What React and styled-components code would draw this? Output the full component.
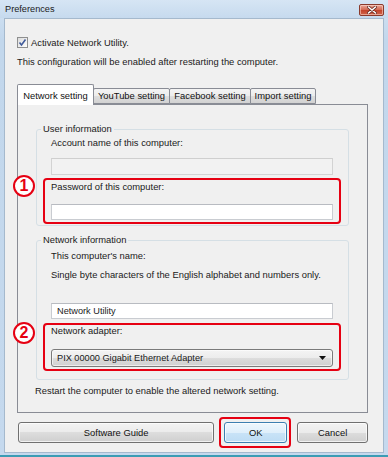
import React from "react";
import styled, { createGlobalStyle } from "styled-components";

const GlobalStyle = createGlobalStyle`
  html, body { margin: 0; padding: 0; background: #ffffff; }
  body { font-family: "Liberation Sans", Arial, sans-serif; }
  *, *::before, *::after { box-sizing: border-box; }
`;

const FONT = `"Liberation Sans", Arial, sans-serif`;
const RED = "#e60012";

const Window = styled.div`
  width: 388px;
  height: 457px;
  display: flex;
  flex-direction: column;
  background: linear-gradient(#d3e3f3, #c2d7ec 40px, #c5d9ee);
  border-bottom: 2px solid #3b9cb4;
  font-family: ${FONT};
  font-size: 9.4px;
  color: #1a1a1a;
`;

const TitleBar = styled.div`
  height: 18px;
  flex: none;
  display: flex;
  align-items: center;
  padding: 0 4px 0 5px;
  background: linear-gradient(#d6e5f4, #c6daee);
`;

const Title = styled.span`
  font-size: 9.2px;
  color: #1b1b1b;
  flex: 1;
`;

const CloseButton = styled.div`
  width: 25px;
  height: 12px;
  margin-top: 1px;
  border: 1px solid #8a3a2c;
  border-radius: 2px;
  background: linear-gradient(#e9aa9c, #d56d57 45%, #c4452d 55%, #d0654c);
  box-shadow: inset 0 0 0 1px rgba(255, 220, 210, 0.55);
  display: flex;
  align-items: center;
  justify-content: center;
`;

const Client = styled.div`
  flex: 1;
  margin: 0 4px 2px 4px;
  background: #f0f0f0;
  border: 1px solid #a5b9cd;
  display: flex;
  flex-direction: column;
  padding: 0 15px 0 12px;
`;

const CheckRow = styled.label`
  margin-top: 16px;
  height: 14px;
  display: flex;
  align-items: center;
  gap: 3px;
`;

const CheckBox = styled.span`
  width: 11px;
  height: 11px;
  border: 1px solid #8e8f8f;
  background: linear-gradient(135deg, #dcdcdc, #fdfdfd);
  display: flex;
  align-items: center;
  justify-content: center;
`;

const Line = styled.div`
  height: ${(p) => p.$h || 14}px;
  line-height: ${(p) => p.$h || 14}px;
  margin-top: ${(p) => p.$mt || 0}px;
  margin-left: ${(p) => p.$ml || 0}px;
  white-space: nowrap;
`;

const TabBar = styled.div`
  margin-top: 15px;
  display: flex;
  align-items: flex-end;
  height: 20px;
`;

const Tab = styled.div`
  position: relative;
  z-index: ${(p) => (p.$active ? 2 : 1)};
  width: ${(p) => p.$w}px;
  height: ${(p) => (p.$active ? 21 : 16)}px;
  margin-left: ${(p) => (p.$first ? 0 : -1)}px;
  margin-bottom: ${(p) => (p.$active ? -1 : 0)}px;
  padding-top: ${(p) => (p.$active ? 4 : 0)}px;
  border: 1px solid #898c95;
  border-bottom: ${(p) => (p.$active ? "none" : "1px solid #898c95")};
  border-radius: 2px 2px 0 0;
  background: ${(p) =>
    p.$active
      ? "#ffffff"
      : "linear-gradient(#f4f4f4, #ececec 50%, #dedede 50%, #d2d2d2)"};
  display: flex;
  align-items: ${(p) => (p.$active ? "flex-start" : "center")};
  justify-content: center;
  white-space: nowrap;
  color: #111;
  line-height: 14px;
`;

const Panel = styled.div`
  border: 1px solid #898c95;
  background: #f0f0f0;
  padding: 18px 18px 14px 18px;
  display: flex;
  flex-direction: column;
`;

const Group = styled.fieldset`
  margin: ${(p) => p.$mt || 0}px 0 0 0;
  padding: 0 15px ${(p) => p.$pb || 0}px 14px;
  border: 1px solid #d5dfe5;
  border-radius: 3px;
  min-width: 0;
`;

const Legend = styled.legend`
  margin-left: -10px;
  padding: 0 2px;
  height: 12px;
  line-height: 12px;
  color: #1a1a1a;
`;

const TextBox = styled.div`
  height: ${(p) => p.$h || 17}px;
  margin-top: ${(p) => p.$mt || 0}px;
  border: 1px solid ${(p) => (p.$disabled ? "#d3d3d3" : "#c9ccd1")};
  border-top-color: ${(p) => (p.$disabled ? "#cfcfcf" : "#b8bbc1")};
  background: ${(p) => (p.$disabled ? "#f2f2f2" : "#ffffff")};
  padding-left: 5px;
  display: flex;
  align-items: center;
  font-size: 9.2px;
  color: #222;
  white-space: nowrap;
`;

const Marked = styled.div`
  position: relative;
  margin: ${(p) => p.$mt || 0}px -8px 0 -8px;
  padding: 0 6px 2px 6px;
  border: 2px solid ${RED};
  border-radius: 4px;
`;

const Badge = styled.div`
  position: absolute;
  left: -32px;
  top: ${(p) => p.$top}px;
  width: 22px;
  height: 22px;
  border: 2px solid ${RED};
  border-radius: 50%;
  background: #ffffff;
  color: ${RED};
  font-family: "Liberation Sans", Arial, sans-serif;
  font-weight: bold;
  font-size: 16px;
  line-height: 18px;
  text-align: center;
`;

const Select = styled.div`
  height: 18px;
  margin-top: ${(p) => p.$mt || 0}px;
  border: 1px solid #7a7a7a;
  border-radius: 3px;
  background: linear-gradient(#f4f4f4, #ececec 50%, #dddddd 50%, #d0d0d0);
  box-shadow: inset 0 0 0 1px rgba(255, 255, 255, 0.6);
  display: flex;
  align-items: center;
  padding: 0 6px 0 5px;
  font-size: 9.2px;
  color: #1a1a1a;
  white-space: nowrap;
`;

const SelectText = styled.span`
  flex: 1;
`;

const ButtonRow = styled.div`
  margin-top: 4px;
  display: flex;
  align-items: center;
  padding-left: 1px;
`;

const Button = styled.button`
  width: ${(p) => p.$w}px;
  height: 21px;
  margin-left: ${(p) => p.$ml || 0}px;
  padding: 0;
  border: 1px solid ${(p) => (p.$primary ? "#3c7fb1" : "#707070")};
  border-radius: 3px;
  background: ${(p) =>
    p.$primary
      ? "linear-gradient(#eef7fd, #dfeffb 50%, #c9e3f7 50%, #bddcf4)"
      : "linear-gradient(#f3f3f3, #ebebeb 50%, #dddddd 50%, #cfcfcf)"};
  box-shadow: inset 0 0 0 1px rgba(255, 255, 255, 0.7);
  font-family: ${FONT};
  font-size: 9.4px;
  color: #111;
`;

const Highlight = styled.div`
  margin-left: ${(p) => p.$ml || 0}px;
  padding: 3px 2px 3px 3px;
  border: 2px solid ${RED};
  border-radius: 4px;
  display: flex;
`;

export default function App() {
  return (
    <>
      <GlobalStyle />
      <Window>
        <TitleBar>
          <Title>Preferences</Title>
          <CloseButton>
            <svg width="10" height="8" viewBox="0 0 10 8">
              <path d="M1.5 1 L8.5 7 M8.5 1 L1.5 7" stroke="#6b2a20" strokeWidth="3" strokeLinecap="round" />
              <path d="M1.5 1 L8.5 7 M8.5 1 L1.5 7" stroke="#ffffff" strokeWidth="1.6" strokeLinecap="round" />
            </svg>
          </CloseButton>
        </TitleBar>
        <Client>
          <CheckRow>
            <CheckBox>
              <svg width="9" height="9" viewBox="0 0 9 9">
                <path d="M1.5 4.5 L3.5 7 L7.5 1.5" fill="none" stroke="#3f5a9a" strokeWidth="1.6" />
              </svg>
            </CheckBox>
            <span>Activate Network Utility.</span>
          </CheckRow>
          <Line $mt={6}>This configuration will be enabled after restarting the computer.</Line>
          <TabBar>
            <Tab $active $first $w={77}>Network setting</Tab>
            <Tab $w={77}>YouTube setting</Tab>
            <Tab $w={82}>Facebook setting</Tab>
            <Tab $w={66}>Import setting</Tab>
          </TabBar>
          <Panel>
            <Group $pb={1}>
              <Legend>User information</Legend>
              <Line $mt={1}>Account name of this computer:</Line>
              <TextBox $disabled $mt={8} $h={17} />
              <Marked $mt={3}>
                <Badge $top={-5}>1</Badge>
                <Line>Password of this computer:</Line>
                <TextBox $mt={10} $h={16} />
              </Marked>
            </Group>
            <Group $mt={8} $pb={8}>
              <Legend>Network information</Legend>
              <Line $mt={3}>This computer's name:</Line>
              <Line $mt={5}>Single byte characters of the English alphabet and numbers only.</Line>
              <TextBox $mt={21} $h={16}>Network Utility</TextBox>
              <Marked $mt={4}>
                <Badge $top={-3}>2</Badge>
                <Line $h={12}>Network adapter:</Line>
                <Select $mt={12}>
                  <SelectText>PIX 00000 Gigabit Ethernet Adapter</SelectText>
                  <svg width="7" height="4" viewBox="0 0 7 4">
                    <path d="M0 0 H7 L3.5 4 Z" fill="#111" />
                  </svg>
                </Select>
              </Marked>
            </Group>
            <Line $mt={4} $ml={-1}>Restart the computer to enable the altered network setting.</Line>
          </Panel>
          <ButtonRow>
            <Button $w={197}>Software Guide</Button>
            <Highlight $ml={5}>
              <Button $primary $w={63}>OK</Button>
            </Highlight>
            <Button $w={71} $ml={6}>Cancel</Button>
          </ButtonRow>
        </Client>
      </Window>
    </>
  );
}
